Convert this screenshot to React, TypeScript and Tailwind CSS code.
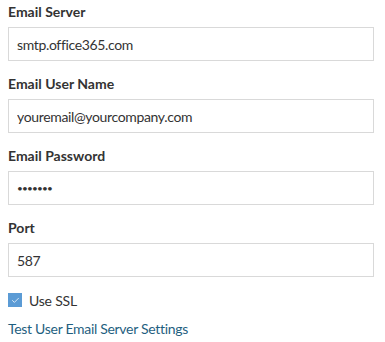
import { Check } from "lucide-react";

const fields = [
  { label: "Email Server", value: "smtp.office365.com" },
  { label: "Email User Name", value: "youremail@yourcompany.com" },
  { label: "Email Password", value: "•••••••", secret: true },
  { label: "Port", value: "587" },
];

export default function App() {
  return (
    <div className="w-[385px] h-[342px] bg-white px-2 pt-[2px] text-[#333] font-['Lato',sans-serif]">
      {fields.map((f) => (
        <div key={f.label} className="mb-[13px]">
          <label className="block text-[14px] font-bold leading-[20px] mb-[5px]">{f.label}</label>
          <input
            type="text"
            defaultValue={f.value}
            readOnly
            className={
              f.secret
                ? "block w-[366px] h-[34px] border border-[#d9d9d9] px-2 text-[10px] tracking-[-0.8px] text-[#333] outline-none"
                : "block w-[366px] h-[34px] border border-[#d9d9d9] px-2 text-[14px] tracking-[-0.35px] text-[#333] outline-none"
            }
          />
        </div>
      ))}
      <label className="flex items-center gap-[7px] mt-[5px] h-[20px] text-[14px] tracking-[-0.2px]">
        <span className="w-[14px] h-[14px] bg-[#5b9bd5] flex items-center justify-center">
          <Check className="w-[9px] h-[9px] text-white" strokeWidth={2} />
        </span>
        Use SSL
      </label>
      <a href="#" className="block mt-[9px] leading-[20px] text-[14px] tracking-[-0.3px] text-[#1f5f7f]">
        Test User Email Server Settings
      </a>
    </div>
  );
}
